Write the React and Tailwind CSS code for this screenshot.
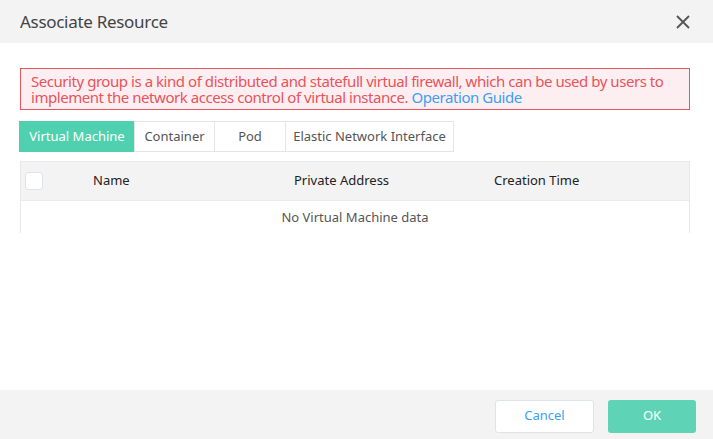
import React, { useState } from 'react';

const tabs = ['Virtual Machine', 'Container', 'Pod', 'Elastic Network Interface'];
const tabWidths = ['w-[116px]', 'w-[81px]', 'w-[72px]', 'w-[169px]'];

const App = () => {
    const [active, setActive] = useState(0);
    const [checked, setChecked] = useState(false);

    return (
        <div className="w-[713px] h-[439px] bg-white flex flex-col text-[#333] font-['Noto_Sans',sans-serif] overflow-hidden">
            {/* header */}
            <div className="h-[43px] bg-[#f3f3f3] flex items-center justify-between pl-[20px] pr-[22px] shrink-0">
                <h2 className="text-[17px] text-[#444] leading-none tracking-[-0.3px]">Associate Resource</h2>
                <button className="text-[#555]">
                    <svg width="16" height="16" viewBox="0 0 16 16" fill="none" stroke="currentColor" strokeWidth="1.8">
                        <path d="M2 2 L14 14 M14 2 L2 14" />
                    </svg>
                </button>
            </div>

            {/* body */}
            <div className="flex-1 pl-[20px] pr-[23px] pt-[25px]">
                <div className="border border-[#e4575e] bg-[#fdeff1] pl-[10px] pr-[4px] py-[4px] text-[15px] leading-[16px] text-[#e8535c] tracking-[-0.45px]">
                    Security group is a kind of distributed and statefull virtual firewall, which can be used by users to implement the network access control of virtual instance.{' '}
                    <a href="#" className="text-[#3b9ff3]">Operation Guide</a>
                </div>

                <div className="flex mt-[11px] -ml-px">
                    {tabs.map((t, i) => (
                        <button
                            key={t}
                            onClick={() => setActive(i)}
                            className={`${tabWidths[i]} h-[31px] text-[13px] border ${i > 0 ? '-ml-px' : ''} ${
                                active === i
                                    ? 'bg-[#4fd1b0] border-[#4fd1b0] text-white'
                                    : 'bg-white border-[#e5e5e5] text-[#555]'
                            }`}
                        >
                            {t}
                        </button>
                    ))}
                </div>

                <div className="mt-[9px] border-x border-t border-[#e8e8e8] h-[72px]">
                    <div className="h-[39px] bg-[#f3f3f3] flex items-center text-[13px] text-[#222] border-b border-[#ececec]">
                        <div className="w-[72px] pl-[4px] flex">
                            <button
                                onClick={() => setChecked(!checked)}
                                className="w-[18px] h-[18px] rounded-[3px] bg-white border border-[#dfe3ea]"
                            />
                        </div>
                        <div className="w-[201px]">Name</div>
                        <div className="w-[200px]">Private Address</div>
                        <div className="flex-1">Creation Time</div>
                    </div>
                    <div className="h-[33px] flex items-center justify-center text-[13px] text-[#555]">
                        No {tabs[active]} data
                    </div>
                </div>
            </div>

            {/* footer */}
            <div className="h-[49px] bg-[#f3f3f3] flex items-center justify-end gap-[14px] pr-[17px] pt-[3px] shrink-0">
                <button className="w-[99px] h-[33px] bg-white border border-[#dde3ea] rounded-[3px] text-[13px] text-[#3b9ff3]">
                    Cancel
                </button>
                <button className="w-[88px] h-[33px] bg-[#5fd3b5] rounded-[3px] text-[13px] text-white">
                    OK
                </button>
            </div>
        </div>
    );
};

export default App;
